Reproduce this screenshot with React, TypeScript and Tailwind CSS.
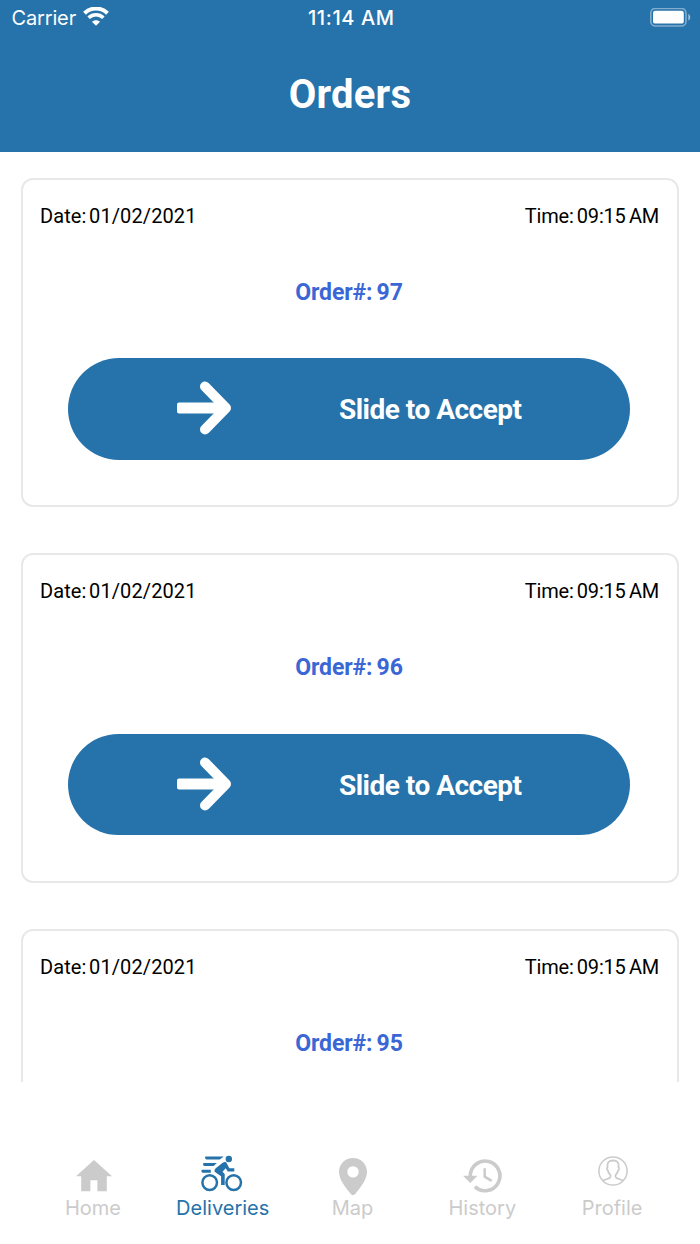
import type { ReactNode } from 'react'

type Order = {
  id: number
  date: string
  time: string
}

type Tab = {
  label: string
  icon: ReactNode
  active?: boolean
}

const orders: Order[] = [
  { id: 97, date: '01/02/2021', time: '09:15 AM' },
  { id: 96, date: '01/02/2021', time: '09:15 AM' },
  { id: 95, date: '01/02/2021', time: '09:15 AM' },
]

function WifiIcon() {
  return (
    <svg className="-mt-0.5 -ml-px" width="26" height="20" viewBox="0 0 26 20" fill="none" stroke="currentColor">
      <path d="M1.5 6.2C8-.1 18-.1 24.5 6.2" strokeWidth="4" />
      <path d="M5.6 10.7c4.2-4 10.6-4 14.8 0" strokeWidth="3.6" />
      <path d="M13 18.8l-4.1-4c2.3-2.2 5.9-2.2 8.2 0z" fill="currentColor" stroke="none" />
    </svg>
  )
}

function BatteryIcon() {
  return (
    <svg width="41" height="20" viewBox="0 0 41 20">
      <rect x="0.8" y="0.4" width="35.2" height="17.6" rx="4.6" fill="none" stroke="white" strokeOpacity="0.42" strokeWidth="1.6" />
      <rect x="3" y="2.8" width="30.8" height="12.8" rx="2.2" fill="white" />
      <path d="M38.3 6c2.6 1 2.6 5.6 0 6.6z" fill="white" fillOpacity="0.55" />
    </svg>
  )
}

function ArrowIcon() {
  return (
    <svg width="56" height="54" viewBox="0 0 56 54" fill="none" stroke="white">
      <path d="M29 5.5L50 26.9 29 48.5" strokeWidth="10" strokeLinecap="round" strokeLinejoin="round" />
      <path d="M3 21.5h44v11H3a2 2 0 0 1-2-2v-7a2 2 0 0 1 2-2z" fill="white" stroke="none" />
    </svg>
  )
}

function HomeIcon() {
  return (
    <svg className="ml-0.5" width="36" height="32" viewBox="0 0 36 32" fill="currentColor">
      <path d="M18 0l18 16.3h-5.2V31.3h-9.4V20.2h-7v11.1H5.2v-15H0z" />
    </svg>
  )
}

function BikeIcon() {
  return (
    <svg className="mb-1 -ml-px" width="42" height="38" viewBox="0 0 42 38" fill="none" stroke="currentColor">
      <circle cx="8.7" cy="27.6" r="7.3" strokeWidth="2.5" />
      <circle cx="32.7" cy="27.6" r="7.3" strokeWidth="2.5" />
      <circle cx="27.8" cy="4" r="3.2" fill="currentColor" stroke="none" />
      <path d="M4.3 1.4h18.4l-4 3.1H5.8c-1.4 0-2-1.4-1.5-3.1zM2.3 8h13.6L12.6 11H3.8c-1.4 0-2-1.3-1.5-3zM.6 14.7h9.2v3.1H2C.7 17.8.1 16.4.6 14.7z" fill="currentColor" stroke="none" />
      <path d="M14.7 13.2l7-5.4c1.6-1.2 3.4-.8 4.2.7l2.4 4.7h5v3.3h-6.5l-2.1-3.3-3.2 3.5 2.2 2.4v10.8h-3.6v-8.6l-5.8-4c-1.3-1-1-2.6.4-4.1z" fill="currentColor" stroke="none" />
    </svg>
  )
}

function MapIcon() {
  return (
    <svg className="mt-[3px] ml-0.5" width="28" height="38" viewBox="0 0 28 38" fill="currentColor">
      <path fillRule="evenodd" d="M14 0C6.2 0 0 6.2 0 13.8c0 8.4 6.7 15.7 11.8 22.2 1.2 1.5 3.2 1.5 4.4 0C21.3 29.5 28 22.2 28 13.8 28 6.2 21.8 0 14 0zm0 8.2a5.7 5.7 0 1 1 0 11.4 5.7 5.7 0 0 1 0-11.4z" />
    </svg>
  )
}

function HistoryIcon() {
  return (
    <svg className="mt-px ml-0.5" width="40" height="34" viewBox="0 0 40 34" fill="none" stroke="currentColor">
      <path d="M7.3 17A14.8 14.8 0 1 1 11.9 27.6" strokeWidth="3.6" />
      <path d="M0 16.7h14.5l-7.2 7.2z" fill="currentColor" stroke="none" />
      <path d="M21.7 9.3v8.4l7 4.1" strokeWidth="2.5" />
    </svg>
  )
}

function ProfileIcon() {
  return (
    <svg className="mb-[9px] ml-0.5" width="30" height="30" viewBox="0 0 30 30" fill="none" stroke="currentColor" strokeWidth="1.5">
      <circle cx="15" cy="15" r="14.1" />
      <path d="M4.7 24.7c2.8-1.6 6.8-1.8 7.6-3.6.3-.8.2-1.9-.2-2.5-1.2-1-1.9-2.4-2.2-4.1-1-.6-1.3-2.5-.4-3.3C8.8 6.8 10.6 4.5 15 4.5s6.2 2.3 5.5 6.7c.9.8.6 2.7-.4 3.3-.3 1.7-1 3.1-2.2 4.1-.4.6-.5 1.7-.2 2.5.8 1.8 4.8 2 7.6 3.6" strokeWidth="1.8" />
    </svg>
  )
}

const tabs: Tab[] = [
  { label: 'Home', icon: <HomeIcon /> },
  { label: 'Deliveries', icon: <BikeIcon />, active: true },
  { label: 'Map', icon: <MapIcon /> },
  { label: 'History', icon: <HistoryIcon /> },
  { label: 'Profile', icon: <ProfileIcon /> },
]

function Header() {
  return (
    <header className="h-[152.4px] shrink-0 bg-[#2672aa] text-white">
      <div className="grid h-9 grid-cols-3 items-center pr-[9px] pl-[11.5px] font-[Inter,sans-serif] text-xl leading-9">
        <div className="flex items-center gap-2">
          <span className="tracking-[-0.15px]">Carrier</span>
          <WifiIcon />
        </div>
        <span className="text-center font-medium tracking-[0.6px] whitespace-nowrap">11:14 AM</span>
        <div className="flex justify-end">
          <BatteryIcon />
        </div>
      </div>
      <h1 className="mt-[35px] text-center text-[40px] leading-12 font-bold tracking-[0.2px]">Orders</h1>
    </header>
  )
}

function OrderCard({ order }: { order: Order }) {
  return (
    <article className="h-[329.6px] shrink-0 rounded-xl border-2 border-[#e8e8e8] px-[17px] pt-[22px]">
      <div className="flex justify-between pr-px text-xl leading-7 text-black">
        <span className="tracking-[0.1px] [word-spacing:-2.5px]">Date: {order.date}</span>
        <span className="tracking-[-0.2px] [word-spacing:-1.5px]">Time: {order.time}</span>
      </div>
      <p className="mt-[49px] pr-0.5 text-center text-[23px] leading-7 font-bold tracking-[-0.1px] text-[#3b66d6] [word-spacing:-1.5px]">
        Order#: {order.id}
      </p>
      <button className="mt-[51.5px] ml-[28.4px] flex h-[101.5px] w-[562px] items-center rounded-full bg-[#2672aa] pl-[108px] text-white">
        <div className="pb-0.5">
          <ArrowIcon />
        </div>
        <span className="mt-0.5 ml-[106.5px] text-[28px] leading-9 font-bold tracking-[-0.5px] whitespace-nowrap">
          Slide to Accept
        </span>
      </button>
    </article>
  )
}

function TabBar() {
  return (
    <nav className="grid h-[162px] shrink-0 grid-cols-5 pr-[23px] pl-[28px] pt-[74px] font-[Inter,sans-serif]">
      {tabs.map((tab) => (
        <div
          key={tab.label}
          className={`flex flex-col items-center ${tab.active ? 'text-[#2672aa]' : 'text-[#cbcbcb]'}`}
        >
          <div className="flex h-10 items-center justify-center">{tab.icon}</div>
          <span className="text-xl leading-6">{tab.label}</span>
        </div>
      ))}
    </nav>
  )
}

export default function App() {
  return (
    <div className="flex h-[1244px] w-[700px] flex-col overflow-hidden bg-white font-[Roboto,sans-serif]">
      <Header />
      <main className="flex h-[929.4px] shrink-0 flex-col gap-[46px] overflow-hidden px-[21px] pt-[25.4px]">
        {orders.map((order) => (
          <OrderCard key={order.id} order={order} />
        ))}
      </main>
      <TabBar />
    </div>
  )
}
